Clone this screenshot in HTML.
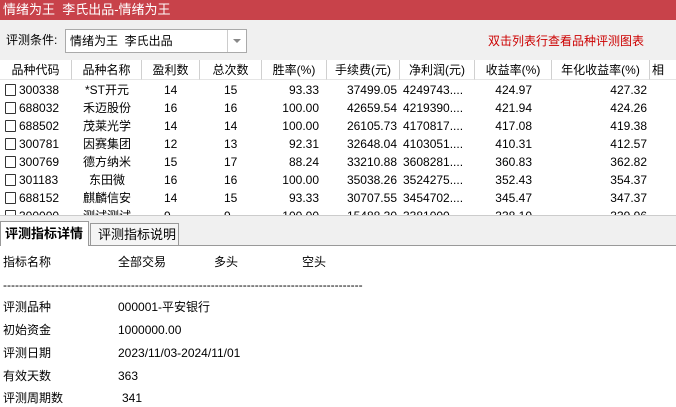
<!DOCTYPE html><html><head><meta charset="utf-8"><style>
*{margin:0;padding:0;box-sizing:border-box}
body{width:676px;height:403px;overflow:hidden;background:#fff;font-family:"Liberation Sans","Noto Sans CJK SC",sans-serif;font-size:12px;color:#000;position:relative}
.a{position:absolute;white-space:nowrap}
#title{left:0;top:0;width:676px;height:20px;background:#c8424a;color:#fff;font-size:13px;line-height:19px;padding-left:3px}
#bar{left:0;top:20px;width:676px;height:40px;background:#f0f0f0}
.hd{top:60px;height:20px;background:#fff;border-right:1px solid #d0d0d0;border-bottom:1px solid #e5e5e5;text-align:center;line-height:20px;font-size:12px}
.c{font-size:12px;line-height:18px}
.r{text-align:right}
.cb{display:inline-block;width:11px;height:12px;border:1px solid #333;border-radius:1px;vertical-align:-2px;margin-right:3px}
</style></head><body>
<div class="a" id="title">情绪为王&nbsp; 李氏出品-情绪为王</div>
<div class="a" id="bar"></div>
<div class="a" style="left:6px;top:31px;font-size:12px">评测条件:</div>
<div class="a" style="left:65px;top:29px;width:182px;height:24px;background:#fff;border:1px solid #aaa;font-size:12px;line-height:22px;padding-left:4px">情绪为王&nbsp; 李氏出品</div>
<div class="a" style="left:227px;top:30px;width:1px;height:22px;background:#ccc"></div>
<div class="a" style="left:233px;top:39px;width:0;height:0;border-left:4px solid transparent;border-right:4px solid transparent;border-top:4px solid #888"></div>
<div class="a" style="left:488px;top:32px;color:#c00;font-size:12px">双击列表行查看品种评测图表</div>
<div class="a hd" style="left:0;width:72px">品种代码</div>
<div class="a hd" style="left:72px;width:70px">品种名称</div>
<div class="a hd" style="left:142px;width:58px">盈利数</div>
<div class="a hd" style="left:200px;width:62px">总次数</div>
<div class="a hd" style="left:262px;width:65px">胜率(%)</div>
<div class="a hd" style="left:327px;width:73px">手续费(元)</div>
<div class="a hd" style="left:400px;width:75px">净利润(元)</div>
<div class="a hd" style="left:475px;width:77px">收益率(%)</div>
<div class="a hd" style="left:552px;width:98px">年化收益率(%)</div>
<div class="a hd" style="left:650px;width:40px;text-align:left;padding-left:2px">相</div>
<div class="a" style="left:0;top:81px;width:676px;height:134px;overflow:hidden">
<table style="border-collapse:collapse;font-size:12px;position:absolute;left:0;top:0">
<colgroup><col style="width:72px"><col style="width:70px"><col style="width:58px"><col style="width:62px"><col style="width:65px"><col style="width:73px"><col style="width:75px"><col style="width:77px"><col style="width:98px"></colgroup>
<tbody style="line-height:18px">
<tr><td style="padding-left:5px"><span class="cb"></span>300338</td><td style="text-align:center">*ST开元</td><td style="padding-left:22px">14</td><td style="padding-left:24px">15</td><td class="r" style="padding-right:8px">93.33</td><td class="r" style="padding-right:3px">37499.05</td><td style="padding-left:3px">4249743....</td><td class="r" style="padding-right:20px">424.97</td><td class="r" style="padding-right:3px">427.32</td></tr>
<tr><td style="padding-left:5px"><span class="cb"></span>688032</td><td style="text-align:center">禾迈股份</td><td style="padding-left:22px">16</td><td style="padding-left:24px">16</td><td class="r" style="padding-right:8px">100.00</td><td class="r" style="padding-right:3px">42659.54</td><td style="padding-left:3px">4219390....</td><td class="r" style="padding-right:20px">421.94</td><td class="r" style="padding-right:3px">424.26</td></tr>
<tr><td style="padding-left:5px"><span class="cb"></span>688502</td><td style="text-align:center">茂莱光学</td><td style="padding-left:22px">14</td><td style="padding-left:24px">14</td><td class="r" style="padding-right:8px">100.00</td><td class="r" style="padding-right:3px">26105.73</td><td style="padding-left:3px">4170817....</td><td class="r" style="padding-right:20px">417.08</td><td class="r" style="padding-right:3px">419.38</td></tr>
<tr><td style="padding-left:5px"><span class="cb"></span>300781</td><td style="text-align:center">因赛集团</td><td style="padding-left:22px">12</td><td style="padding-left:24px">13</td><td class="r" style="padding-right:8px">92.31</td><td class="r" style="padding-right:3px">32648.04</td><td style="padding-left:3px">4103051....</td><td class="r" style="padding-right:20px">410.31</td><td class="r" style="padding-right:3px">412.57</td></tr>
<tr><td style="padding-left:5px"><span class="cb"></span>300769</td><td style="text-align:center">德方纳米</td><td style="padding-left:22px">15</td><td style="padding-left:24px">17</td><td class="r" style="padding-right:8px">88.24</td><td class="r" style="padding-right:3px">33210.88</td><td style="padding-left:3px">3608281....</td><td class="r" style="padding-right:20px">360.83</td><td class="r" style="padding-right:3px">362.82</td></tr>
<tr><td style="padding-left:5px"><span class="cb"></span>301183</td><td style="text-align:center">东田微</td><td style="padding-left:22px">16</td><td style="padding-left:24px">16</td><td class="r" style="padding-right:8px">100.00</td><td class="r" style="padding-right:3px">35038.26</td><td style="padding-left:3px">3524275....</td><td class="r" style="padding-right:20px">352.43</td><td class="r" style="padding-right:3px">354.37</td></tr>
<tr><td style="padding-left:5px"><span class="cb"></span>688152</td><td style="text-align:center">麒麟信安</td><td style="padding-left:22px">14</td><td style="padding-left:24px">15</td><td class="r" style="padding-right:8px">93.33</td><td class="r" style="padding-right:3px">30707.55</td><td style="padding-left:3px">3454702....</td><td class="r" style="padding-right:20px">345.47</td><td class="r" style="padding-right:3px">347.37</td></tr>
<tr><td style="padding-left:5px"><span class="cb"></span>300000</td><td style="text-align:center">测试测试</td><td style="padding-left:22px">9</td><td style="padding-left:24px">9</td><td class="r" style="padding-right:8px">100.00</td><td class="r" style="padding-right:3px">15488.30</td><td style="padding-left:3px">3381000....</td><td class="r" style="padding-right:20px">338.10</td><td class="r" style="padding-right:3px">339.96</td></tr>
</tbody></table></div>
<div class="a" style="left:0;top:215px;width:676px;height:31px;background:#f0f0f0;border-top:1px solid #ccc;border-bottom:1px solid #999"></div>
<div class="a" style="left:0;top:221px;width:89px;height:25px;background:#fff;border:1px solid #999;border-bottom:none;font-weight:bold;font-size:13px;line-height:24px;padding-left:4px">评测指标详情</div>
<div class="a" style="left:90px;top:223px;width:89px;height:22px;background:#f5f5f5;border:1px solid #999;border-bottom:none;font-size:13px;line-height:21px;padding-left:7px">评测指标说明</div>
<div class="a c" style="left:3px;top:253px">指标名称</div>
<div class="a c" style="left:118px;top:253px">全部交易</div>
<div class="a c" style="left:214px;top:253px">多头</div>
<div class="a c" style="left:302px;top:253px">空头</div>
<div class="a c" style="left:3px;top:276px">------------------------------------------------------------------------------------------</div>
<div class="a c" style="left:3px;top:298px">评测品种</div><div class="a c" style="left:118px;top:298px">000001-平安银行</div>
<div class="a c" style="left:3px;top:321px">初始资金</div><div class="a c" style="left:118px;top:321px">1000000.00</div>
<div class="a c" style="left:3px;top:344px">评测日期</div><div class="a c" style="left:118px;top:344px">2023/11/03-2024/11/01</div>
<div class="a c" style="left:3px;top:367px">有效天数</div><div class="a c" style="left:118px;top:367px">363</div>
<div class="a c" style="left:3px;top:389px">评测周期数</div><div class="a c" style="left:122px;top:389px">341</div>
</body></html>
